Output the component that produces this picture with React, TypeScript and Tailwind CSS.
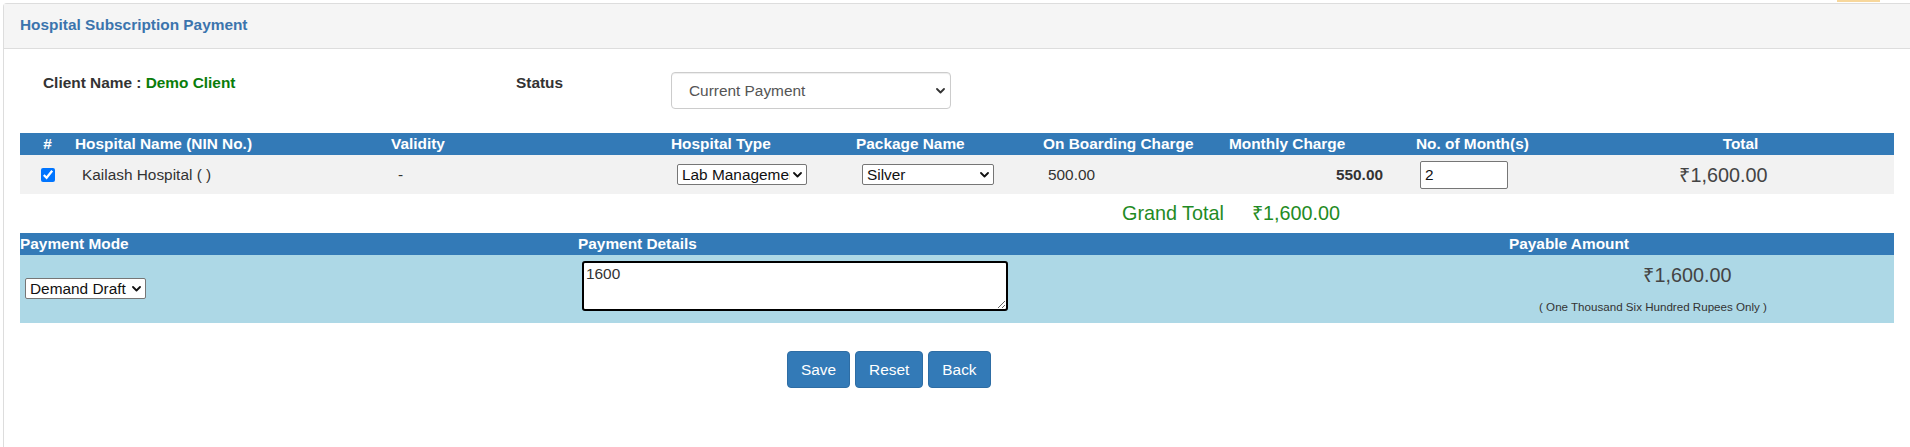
import { useState } from "react";

function Chevron({ className = "" }: { className?: string }) {
  return (
    <svg
      className={`pointer-events-none absolute top-1/2 -translate-y-1/2 ${className}`}
      width="9"
      height="6"
      viewBox="0 0 9 6"
      fill="none"
    >
      <path d="M1 1l3.5 3.5L8 1" stroke="currentColor" strokeWidth="1.8" strokeLinecap="round" strokeLinejoin="round" />
    </svg>
  );
}

function SmallSelect({ value, options, width }: { value: string; options: string[]; width: string }) {
  const [val, setVal] = useState(value);
  return (
    <div className={`relative ${width}`}>
      <select
        value={val}
        onChange={(e) => setVal(e.target.value)}
        className="h-[21px] w-full appearance-none rounded-[2px] border border-[#767676] bg-white pl-[4px] pr-[16px] text-[15.4px] leading-[19px] text-[#111]"
      >
        {options.map((o) => (
          <option key={o}>{o}</option>
        ))}
      </select>
      <Chevron className="right-[5px] text-[#111]" />
    </div>
  );
}

export default function App() {
  const [months, setMonths] = useState("2");
  const [details, setDetails] = useState("1600");
  const [status, setStatus] = useState("Current Payment");

  return (
    <div className="relative h-[447px] overflow-hidden bg-white font-['Liberation_Sans',Arial,sans-serif] text-[#333]">
      {/* bit of a button from above, cut off */}
      <div className="absolute left-[1837px] top-0 h-[2px] w-[43px] bg-[#f7d79c]" />

      <div className="ml-[3px] mt-[3px] min-h-[470px] rounded-tl-[4px] border border-r-0 border-[#ddd]">
        <div className="h-[45px] border-b border-[#ddd] bg-[#f5f5f5] pl-[16px] pt-[11px] text-[15.4px] font-bold leading-[20px] text-[#3b74ad]">
          Hospital Subscription Payment
        </div>

        <div className="px-[16px] pt-[23px]">
          {/* client row */}
          <div className="flex h-[37px] items-start">
            <div className="w-[496px] pl-[23px] pt-[1px] text-[15.4px] font-bold leading-[20px]">
              Client Name : <span className="text-[#0a7d0a]">Demo Client</span>
            </div>
            <div className="w-[155px] pt-[1px] text-[15.4px] font-bold leading-[20px]">Status</div>
            <div className="relative w-[280px]">
              <select
                value={status}
                onChange={(e) => setStatus(e.target.value)}
                className="h-[37px] w-full appearance-none rounded-[4px] border border-[#ccc] bg-white pl-[17px] pr-[24px] text-[15.4px] text-[#555] shadow-[inset_0_1px_1px_rgba(0,0,0,0.075)]"
              >
                <option>Current Payment</option>
                <option>Advance Payment</option>
              </select>
              <Chevron className="right-[6px] text-[#333]" />
            </div>
          </div>

          {/* hospital table */}
          <div className="mt-[24px]">
            <div className="grid h-[22px] grid-cols-[55px_316px_280px_185px_187px_186px_187px_187px_1fr] items-center bg-[#337ab7] text-[15.4px] font-bold leading-[22px] text-white">
              <div className="text-center">#</div>
              <div>Hospital Name (NIN No.)</div>
              <div>Validity</div>
              <div>Hospital Type</div>
              <div>Package Name</div>
              <div>On Boarding Charge</div>
              <div>Monthly Charge</div>
              <div>No. of Month(s)</div>
              <div className="pr-[16px] text-center">Total</div>
            </div>
            <div className="grid h-[39px] grid-cols-[55px_316px_280px_185px_187px_186px_187px_187px_1fr] items-center bg-[#f2f2f2] text-[15.4px] leading-[20px]">
              <div className="flex justify-center">
                <input type="checkbox" defaultChecked className="h-[14px] w-[14px] accent-[#0075ff]" />
              </div>
              <div className="pl-[7px]">Kailash Hospital ( )</div>
              <div className="pl-[7px]">-</div>
              <div className="pl-[6px]">
                <SmallSelect value="Lab Management" options={["Lab Management", "Hospital Management"]} width="w-[130px]" />
              </div>
              <div className="pl-[6px]">
                <SmallSelect value="Silver" options={["Silver", "Gold", "Platinum"]} width="w-[132px]" />
              </div>
              <div className="pl-[5px]">500.00</div>
              <div className="pr-[33px] text-right font-bold">550.00</div>
              <div className="pl-[4px]">
                <input
                  value={months}
                  onChange={(e) => setMonths(e.target.value)}
                  className="h-[28px] w-[88px] rounded-[2px] border border-[#767676] bg-white px-[4px] text-[15.4px] text-[#111]"
                />
              </div>
              <div className="pr-[50px] text-center text-[19.8px] text-[#444]">₹1,600.00</div>
            </div>
          </div>

          {/* grand total */}
          <div className="flex h-[39px] items-center gap-[28px] pl-[1102px] text-[19.8px] text-[#1f8b24]">
            <span>Grand Total</span>
            <span>₹1,600.00</span>
          </div>

          {/* payment table */}
          <div>
            <div className="grid h-[22px] grid-cols-[558px_680px_1fr] items-center bg-[#337ab7] text-[15.4px] font-bold leading-[22px] text-white">
              <div>Payment Mode</div>
              <div>Payment Details</div>
              <div className="pr-[14px] text-center">Payable Amount</div>
            </div>
            <div className="grid h-[68px] grid-cols-[558px_680px_1fr] items-center bg-[#add8e6]">
              <div className="pl-[5px]">
                <SmallSelect value="Demand Draft" options={["Demand Draft", "Cheque", "Cash", "Online"]} width="w-[121px]" />
              </div>
              <div className="self-start pl-[4px] pt-[6px]">
                <textarea
                  value={details}
                  onChange={(e) => setDetails(e.target.value)}
                  className="block h-[50px] w-[426px] resize-y rounded-[3px] border-2 border-black bg-white px-[2px] py-[2px] text-[15.4px] leading-[18px] text-[#333] outline-none"
                />
              </div>
              <div className="self-start pt-[9px]">
                <div className="pl-[223px] text-center text-[19.8px] leading-[22px] text-[#444]">₹1,600.00</div>
                <div className="mt-[14px] pl-[154px] text-center text-[11.6px] leading-[14px] text-[#333]">
                  ( One Thousand Six Hundred Rupees Only )
                </div>
              </div>
            </div>
          </div>

          {/* actions */}
          <div className="mt-[28px] flex gap-[5px] pl-[767px]">
            <button className="h-[37px] rounded-[4px] border border-[#2e6da4] bg-[#337ab7] px-[13px] text-[15.4px] text-white">Save</button>
            <button className="h-[37px] rounded-[4px] border border-[#2e6da4] bg-[#337ab7] px-[13px] text-[15.4px] text-white">Reset</button>
            <button className="h-[37px] rounded-[4px] border border-[#2e6da4] bg-[#337ab7] px-[13px] text-[15.4px] text-white">Back</button>
          </div>
        </div>
      </div>
    </div>
  );
}
